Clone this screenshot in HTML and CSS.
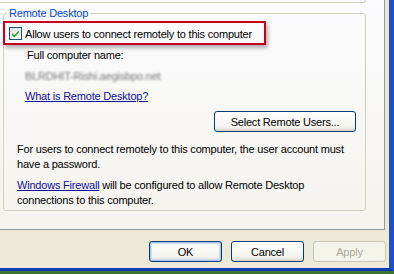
FILE: index.html
```html
<!DOCTYPE html>
<html lang="en">
<head>
  <meta charset="UTF-8" />
  <title>System Properties - Remote</title>
  <link rel="stylesheet" href="styles.css">
</head>
<body>

  <div class="window">
    <!-- Tab page -->
    <div class="tab-page">
      <div class="prev-group"></div>

      <fieldset class="group">
        <legend>Remote Desktop</legend>

        <div class="highlight">
          <svg class="checkbox" width="13" height="13" viewBox="0 0 13 13">
            <defs>
              <linearGradient id="cbg" x1="0" y1="0" x2="1" y2="1">
                <stop offset="0" stop-color="#dcdcd7"/>
                <stop offset="1" stop-color="#ffffff"/>
              </linearGradient>
            </defs>
            <rect x="0.5" y="0.5" width="12" height="12" fill="url(#cbg)" stroke="#1c5180"/>
            <path d="M3 6 L5.2 8.3 L10 3.5 L10 5.6 L5.2 10.4 L3 8.1 Z" fill="#21a121"/>
          </svg>
          <span>Allow users to connect remotely to this computer</span>
        </div>

        <p class="label">Full computer name:</p>
        <p class="computer-name">BLRDHIT-Rishi.aegisbpo.net</p>
        <a class="link" href="#">What is Remote Desktop?</a>

        <div class="users-row">
          <button class="xp-btn users-btn">Select Remote Users...</button>
        </div>

        <p class="note">For users to connect remotely to this computer, the user account must have a password.</p>
        <p class="note"><a class="link" href="#">Windows Firewall</a> will be configured to allow Remote Desktop connections to this computer.</p>
      </fieldset>
    </div>

    <!-- Dialog buttons -->
    <div class="dialog-buttons">
      <button class="xp-btn default">OK</button>
      <button class="xp-btn">Cancel</button>
      <button class="xp-btn" disabled>Apply</button>
    </div>
  </div>

</body>
</html>
```

FILE: styles.css
```css
body {
  margin: 0;
  width: 394px;
  height: 274px;
  overflow: hidden;
  background: #3d7530;
  font-family: "Liberation Sans", Arial, sans-serif;
  font-size: 11px;
  letter-spacing: -0.2px;
  color: #000;
}
.window {
  box-sizing: border-box;
  width: 394px;
  height: 271px;
  background: #ece9d8;
  border-right: 5px solid #1b4fd0;
  border-bottom: 3px solid #0b3cb5;
  display: flex;
  flex-direction: column;
}
.tab-page {
  box-sizing: border-box;
  width: 385px;
  height: 230px;
  background: linear-gradient(#fcfcfe, #f4f3ee);
  border-right: 1px solid #919b9c;
  border-bottom: 1px solid #919b9c;
}
.prev-group {
  box-sizing: border-box;
  width: 366px;
  height: 3px;
  border-right: 1px solid #d0d0bf;
  border-bottom: 1px solid #d0d0bf;
  border-radius: 0 0 3px 0;
}
.group {
  box-sizing: border-box;
  width: 363px;
  height: 204px;
  margin: 4px 0 0 3px;
  padding: 0;
  border: 1px solid #d0d0bf;
  border-radius: 3px;
  min-width: 0;
}
.group legend {
  color: #0046d5;
  line-height: 13px;
  padding: 0 2px;
  margin-left: 3px;
}
.highlight {
  box-sizing: border-box;
  display: flex;
  align-items: center;
  gap: 3px;
  width: 263px;
  height: 24px;
  margin: 1px 0 0 -1px;
  padding: 1px 0 0 4px;
  border: 2px solid #c8001e;
  box-shadow: 2px 3px 4px rgba(0, 0, 0, 0.3);
}
.checkbox {
  flex: none;
}
.label {
  margin: 4px 0 0 23px;
  line-height: 13px;
}
.computer-name {
  margin: 8px 0 0 21px;
  line-height: 13px;
  color: #777;
  filter: blur(0.9px);
}
.link {
  display: inline-block;
  color: #10109a;
  text-decoration: underline;
}
.group > .link {
  margin: 7px 0 0 21px;
  line-height: 13px;
}
.users-row {
  display: flex;
  justify-content: flex-end;
  padding-right: 9px;
  margin-top: 8px;
}
.xp-btn {
  box-sizing: border-box;
  font-family: "Liberation Sans", Arial, sans-serif;
  font-size: 11px;
  letter-spacing: -0.2px;
  color: #000;
  height: 21px;
  padding: 0;
  border: 1px solid #003c74;
  border-radius: 3px;
  background: linear-gradient(#ffffff, #f4f3ee 80%, #d6d0c5);
}
.users-btn {
  width: 142px;
}
.note {
  margin: 10px 0 0 13px;
  width: 345px;
  line-height: 15px;
}
.note + .note {
  margin-top: 6px;
}
.note .link {
  display: inline;
}
.dialog-buttons {
  display: flex;
  justify-content: flex-end;
  gap: 9px;
  margin-top: 11px;
  padding-right: 3px;
}
.dialog-buttons .xp-btn {
  width: 73px;
}
.xp-btn.default {
  box-shadow: inset 0 0 0 1px #a8c4f2, inset 0 0 0 2px #cddcf8;
}
.xp-btn:disabled {
  color: #aca899;
  border-color: #c9c7ba;
  background: #f5f4ea;
}
```
